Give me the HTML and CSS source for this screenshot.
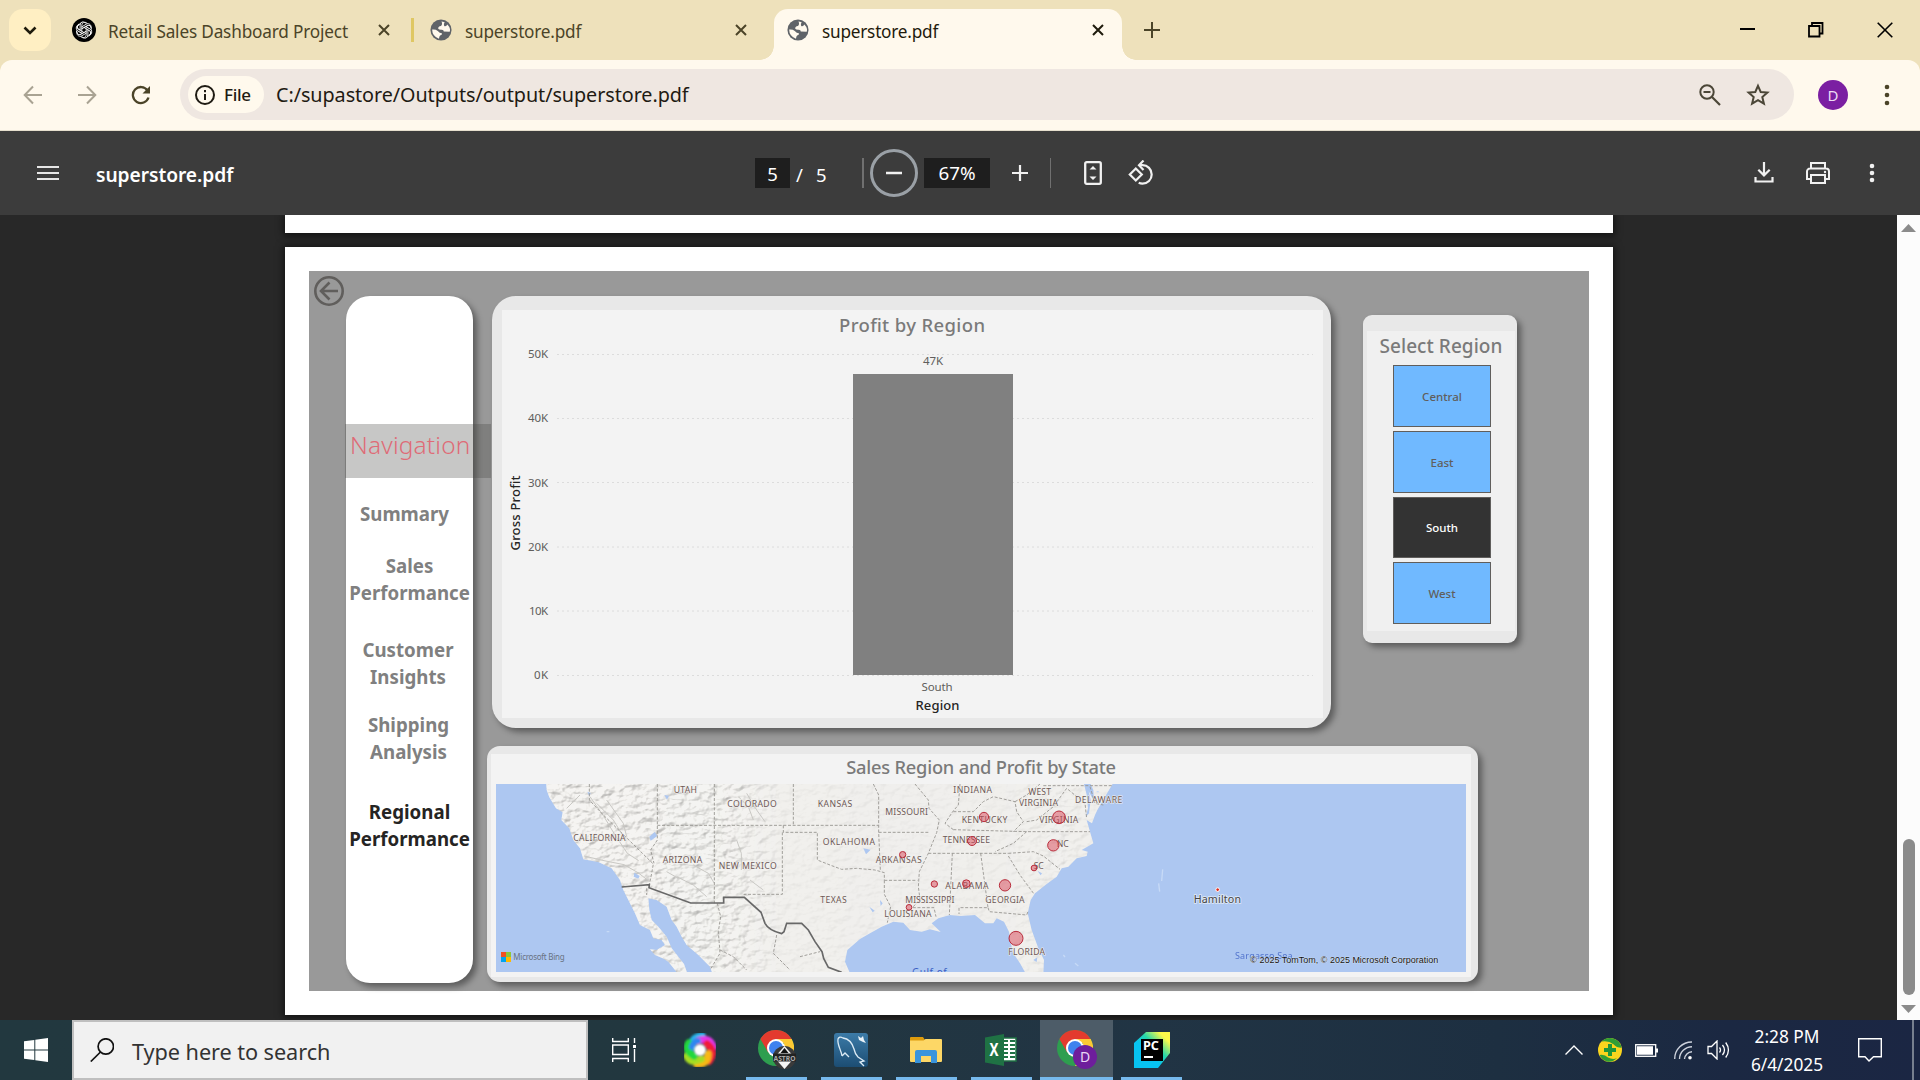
FILE: index.html
```html
<!DOCTYPE html>
<html lang="en">
<head>
<meta charset="utf-8">
<title>superstore.pdf</title>
<link rel="stylesheet" href="styles.css">
</head>
<body>
<svg class="defs" width="0" height="0">
  <defs>
    <symbol id="globe" viewBox="0 0 24 24"><circle cx="12" cy="12" r="11.500" fill="#5f6368"/><path d="M12.500 2.800Q14 6 12 7.500 8.500 8 9 10.500q1 1.500 4 1.200 2 0 2 2l6.500.2q.5-1.500.3-3Q21 8 19 6q-1.500 2.500-3.500 1.500-1-2 .5-4Q14 2.800 12.500 2.800zM2.300 11.500Q6 11 8.500 13q2 2.500 4.500 2.500.5 2-2 2.500-1 1-1.200 3.500Q2.500 19 2.300 11.500z" fill="#fff9ed"/></symbol>
    <symbol id="close" viewBox="0 0 12 12"><path d="M1 1l10 10M11 1L1 11" stroke="currentColor" stroke-width="2" fill="none"/></symbol>
    <symbol id="chrome" viewBox="0 0 36 36"><circle cx="18" cy="18" r="18" fill="#2e9e4f"/><path d="M2.400 9A18 18 0 0 1 33.600 9H18L10.200 22.500z" fill="#e33b2e"/><path d="M33.600 9A18 18 0 0 1 18 36l7.800-13.500L26 9z" fill="#fcc934"/><path d="M18 9h15.600l-1 4H24z" fill="#fcc934"/><circle cx="18" cy="18" r="9" fill="#fff"/><circle cx="18" cy="18" r="7" fill="#3f82ee"/></symbol>
  </defs>
</svg>

<header class="tabs">
  <button class="tab-search"><svg width="14" height="9" viewBox="0 0 14 9"><path d="M1.500 1.500L7 7l5.500-5.500" fill="none" stroke="#1f1b0c" stroke-width="2.600"/></svg></button>
  <div class="tab tab-one">
    <svg class="fav" width="24" height="24" viewBox="0 0 24 24"><circle cx="12" cy="12" r="12" fill="#000"/><g fill="none" stroke="#fff" stroke-width=".9"><path id="petal" d="M9.800 13.300V7.500c0-3.800 4.800-4 5.600-1.500M9.800 8.800l4.600-2.700c3-1.500 5.500 1.500 4.300 4"/><use href="#petal" transform="rotate(60 12 12)"/><use href="#petal" transform="rotate(120 12 12)"/><use href="#petal" transform="rotate(180 12 12)"/><use href="#petal" transform="rotate(240 12 12)"/><use href="#petal" transform="rotate(300 12 12)"/></g></svg>
    <span class="tab-title long">Retail Sales Dashboard Project</span>
    <svg class="x" width="12" height="12"><use href="#close"/></svg>
  </div>
  <i class="tab-sep"></i>
  <div class="tab tab-two">
    <svg class="fav" width="22" height="22"><use href="#globe"/></svg>
    <span class="tab-title">superstore.pdf</span>
    <svg class="x" width="12" height="12"><use href="#close"/></svg>
  </div>
  <div class="tab tab-active">
    <svg class="fav" width="22" height="22"><use href="#globe"/></svg>
    <span class="tab-title">superstore.pdf</span>
    <svg class="x" width="12" height="12"><use href="#close"/></svg>
  </div>
  <svg class="new-tab" width="16" height="16" viewBox="0 0 16 16"><path d="M8 0v16M0 8h16" stroke="#4b4428" stroke-width="2"/></svg>
  <div class="win">
    <svg width="16" height="16" viewBox="0 0 16 16"><path d="M1 7h15" stroke="#000" stroke-width="2"/></svg>
    <svg width="16" height="16" viewBox="0 0 16 16"><path d="M1 4h10.500v10.500H1zM4 4V1h10.500v10.500h-3" fill="none" stroke="#000" stroke-width="1.800"/></svg>
    <svg width="16" height="16" viewBox="0 0 16 16"><path d="M.7.7l14.600 14.600M15.300.7L.7 15.300" stroke="#000" stroke-width="1.600"/></svg>
  </div>
</header>

<div class="toolbar-wrap">
<div class="toolbar">
  <svg class="back" width="20" height="20" viewBox="0 0 20 20"><path d="M19 10H2.500M10 1.500L1.700 10l8.300 8.500" fill="none" stroke="#a9a393" stroke-width="2"/></svg>
  <svg class="fwd" width="20" height="20" viewBox="0 0 20 20"><path d="M1 10h16.500M10 1.500l8.300 8.500-8.300 8.500" fill="none" stroke="#a9a393" stroke-width="2"/></svg>
  <svg class="reload" width="20" height="20" viewBox="0 0 20 20"><path d="M17.500 12.500A8 8 0 1 1 16.500 5.500" fill="none" stroke="#4b4428" stroke-width="2.300"/><path d="M19 1v7.500h-7.500z" fill="#4b4428"/></svg>
  <div class="omnibox">
    <div class="chip"><svg width="20" height="20" viewBox="0 0 20 20"><circle cx="10" cy="10" r="9" fill="none" stroke="#1f1b13" stroke-width="2"/><path d="M10 9v6M10 5v2.200" stroke="#1f1b13" stroke-width="2"/></svg><span>File</span></div>
    <span class="url">C:/supastore/Outputs/output/superstore.pdf</span>
    <svg class="lens" width="22" height="22" viewBox="0 0 22 22"><circle cx="8" cy="8" r="6.700" fill="none" stroke="#4b4637" stroke-width="2"/><path d="M13 13l8 8M4.500 8h7" stroke="#4b4637" stroke-width="2.200"/></svg>
    <svg class="star" width="24" height="24" viewBox="0 0 24 24"><path d="M12 2.800l2.700 6.200 6.700.6-5.100 4.400 1.600 6.600-5.900-3.500-5.900 3.500 1.600-6.600-5.100-4.400 6.700-.6z" fill="none" stroke="#4b4637" stroke-width="2"/></svg>
  </div>
  <span class="avatar">D</span>
  <svg class="kebab" width="6" height="22" viewBox="0 0 6 22"><g fill="#4b4428"><circle cx="3" cy="3" r="2.300"/><circle cx="3" cy="11" r="2.300"/><circle cx="3" cy="19" r="2.300"/></g></svg>
</div>
</div>

<div class="pdfbar">
  <svg class="burger" width="22" height="16" viewBox="0 0 22 16"><path d="M0 2h22M0 8h22M0 14h22" stroke="#e6e6e6" stroke-width="2"/></svg>
  <span class="doc">superstore.pdf</span>
  <div class="pages"><span class="box page-no">5</span><span class="slash">/</span><span class="total">5</span></div>
  <i class="rule"></i>
  <svg class="minus" width="48" height="48" viewBox="0 0 48 48"><circle cx="24" cy="24" r="22.500" fill="none" stroke="#9aa0a6" stroke-width="3"/><path d="M16 24h16" stroke="#f1f1f1" stroke-width="2.500"/></svg>
  <span class="box zoom">67%</span>
  <svg class="plus" width="16" height="16" viewBox="0 0 16 16"><path d="M8 0v16M0 8h16" stroke="#f1f1f1" stroke-width="2.200"/></svg>
  <i class="rule thin"></i>
  <svg class="fit" width="18" height="24" viewBox="0 0 18 24"><rect x="1.200" y="1.200" width="15.600" height="21.600" rx="1.500" fill="none" stroke="#f1f1f1" stroke-width="2.300"/><path d="M5.500 8.500L9 5l3.500 3.500zM5.500 15.500L9 19l3.500-3.500z" fill="#f1f1f1"/></svg>
  <svg class="rot" width="26" height="26" viewBox="0 0 26 26"><path d="M1.800 14.500l6-6 6 6-6 6z" fill="none" stroke="#f1f1f1" stroke-width="2.200"/><path d="M11.500 5.200h3a9.200 9.200 0 0 1 0 18.400c-1.500 0-2.700-.3-3.800-.8" fill="none" stroke="#f1f1f1" stroke-width="2.200"/><path d="M15.500.5L11 5.200l4.500 4.700" fill="none" stroke="#f1f1f1" stroke-width="2.200"/></svg>
  <svg class="dl" width="20" height="22" viewBox="0 0 20 22"><path d="M10 0v13M4.300 7.700L10 13.400l5.700-5.700M1.500 15v4.500h17V15" fill="none" stroke="#f1f1f1" stroke-width="2.200"/></svg>
  <svg class="print" width="24" height="22" viewBox="0 0 24 22"><g fill="none" stroke="#f1f1f1" stroke-width="2"><path d="M5 6V1h14v5M5 17H1V9.500A3 3 0 0 1 4 6.500h16a3 3 0 0 1 3 3V17h-4"/><path d="M5 13h14v8H5z"/></g><circle cx="19" cy="10" r="1.200" fill="#f1f1f1"/></svg>
  <svg class="kebab2" width="6" height="20" viewBox="0 0 6 20"><g fill="#f1f1f1"><circle cx="3" cy="3" r="2.300"/><circle cx="3" cy="10" r="2.300"/><circle cx="3" cy="17" r="2.300"/></g></svg>
</div>

<main class="viewer">
  <div class="sheets">
    <div class="sheet prev"></div>
    <div class="sheet current">
      <div class="report">
        <svg class="go-back" width="30" height="30" viewBox="0 0 30 30"><circle cx="15" cy="15" r="13.700" fill="none" stroke="#605e5c" stroke-width="2.600"/><path d="M24 15H7M15.500 6.500L7 15l8.500 8.500" fill="none" stroke="#605e5c" stroke-width="2.600"/></svg>
        <nav class="nav">
          <div class="nav-head">Navigation</div>
          <a class="n1">Summary</a>
          <a class="n2">Sales<br>Performance</a>
          <a class="n3">Customer<br>Insights</a>
          <a class="n4">Shipping<br>Analysis</a>
          <a class="n5">Regional<br>Performance</a>
        </nav>
        <div class="boards">
          <div class="row">
            <section class="card chart"><div class="inner">
              <svg width="821" height="408" viewBox="502 310 821 408">
                <text class="title" x="912" y="332" text-anchor="middle" textLength="146">Profit by Region</text>
                <g class="grid"><path d="M557 354.500H1313M557 418.500H1313M557 482.500H1313M557 547H1313M557 611H1313M557 675.500H1313"/></g>
                <g class="tick" text-anchor="end"><text x="548" y="358" textLength="20">50K</text><text x="548" y="422" textLength="20">40K</text><text x="548" y="487" textLength="20">30K</text><text x="548" y="551" textLength="20">20K</text><text x="548" y="615" textLength="19">10K</text><text x="548" y="679" textLength="14">0K</text></g>
                <rect x="853" y="374" width="160" height="301" fill="#808080"/>
                <g class="tick" text-anchor="middle"><text x="933" y="365" textLength="20">47K</text><text x="937" y="691" textLength="31">South</text></g>
                <g class="axis" text-anchor="middle"><text x="937.500" y="710" textLength="44">Region</text><text transform="translate(519.500 513) rotate(-90)" textLength="75">Gross Profit</text></g>
              </svg>
            </div></section>
            <section class="card slicer"><div class="inner">
              <h2>Select Region</h2>
              <button>Central</button><button>East</button><button class="on">South</button><button>West</button>
            </div></section>
          </div>
          <section class="card mapcard"><div class="inner">
            <h2>Sales Region and Profit by State</h2>
            <svg class="map" width="970" height="188" viewBox="48 132 2910 564">
              <defs>
                <path id="land" d="M198 120L200 150 208 172 228 205 248 217 244 240 268 265 280 300 300 325 310 358 355 366 395 385 420 420 430 450 445 480 465 520 480 555 510 570 520 595 545 600 555 615 530 630 510 628 525 645 548 655 565 665 585 690 592 700H622L612 672 595 650 575 625 560 590 535 560 515 540 508 510 505 475 530 480 560 500 575 540 590 560 605 590 620 615 655 645 690 680 697 700H1110L1095 665 1102 630 1140 597 1170 580 1205 560 1240 545 1270 548 1290 570 1325 575 1350 568 1382 576 1355 550 1375 535 1410 525 1440 528 1485 525 1515 550 1540 550 1550 535 1572 545 1587 575 1590 600 1600 640 1620 670 1637 700H1690L1692 660 1675 625 1655 570 1643 520 1652 480 1665 460 1700 432 1730 410 1745 385 1765 380 1790 355 1820 348 1823 335 1805 330 1840 310 1830 275 1820 240 1836 250 1845 225 1852 210 1875 170 1905 120z"/>
                <clipPath id="landclip"><use href="#land"/></clipPath>
                <linearGradient id="fade" x1="0" x2="1"><stop offset="0" stop-color="#fff"/><stop offset=".32" stop-color="#ddd"/><stop offset=".42" stop-color="#333"/><stop offset=".8" stop-color="#222"/><stop offset=".9" stop-color="#555"/><stop offset="1" stop-color="#111"/></linearGradient>
                <mask id="reliefmask" maskUnits="userSpaceOnUse" x="190" y="130" width="1720" height="570"><rect x="190" y="130" width="1720" height="570" fill="url(#fade)"/></mask>
                <filter id="relief" x="0" y="0" width="1" height="1" color-interpolation-filters="sRGB"><feTurbulence type="fractalNoise" baseFrequency=".034 .05" numOctaves="3" seed="8"/><feColorMatrix values="0 0 0 0 0 0 0 0 0 0 0 0 0 0 0 1 0 0 0 0"/><feDiffuseLighting surfaceScale="9" diffuseConstant="1.270" lighting-color="#f1f0ed"><feDistantLight azimuth="225" elevation="55"/></feDiffuseLighting></filter>
              </defs>
              <rect x="48" y="132" width="2910" height="564" fill="#adc7f1"/>
              <use href="#land" fill="#f0efec"/>
              <g clip-path="url(#landclip)"><g mask="url(#reliefmask)" opacity=".34"><rect x="190" y="130" width="1720" height="570" filter="url(#relief)"/></g></g>
              <g fill="none" stroke="#c9c8c4" stroke-width="3"><path d="M312 348l60 14 60 12 42 24 26 20M330 170l42 60 30 50 40 60 34 22M350 190l50 50 38 62M380 180l50 70 10 40M300 165l-40 40M640 375l45 25 18 30M590 410l50 25 40 35M560 395l35 20M775 170l30 30 15 40M800 160l30 50 25 35M770 300l14 40 0 50M810 420l40 30"/></g>
              <path d="M1812 132l8 32 4 40-7 28 10-12 5-40-6-26 16 30-2-34-8-18zM508 290l16-14 8 12-20 14zM463 398l16 10-4 8-14-6zM553 165l14 2-6 12zM1150 325l22 4-14 14zM1168 500l16 12-6 5zM1200 480l8 10-6 8zM1660 660l12-8-2 14zM322 155l10 4-4 10zM1672 392l14 8-4 6z" fill="#adc7f1"/>
              <g fill="none" stroke="#9b9995" stroke-width="2.800" stroke-dasharray="9 5">
                <path d="M328 132V180L370 225 520 372 515 400 508 434M532 132V300L512 330 522 370M532 256H1195M703 132V490M940 132V256M910 256V277H1012V360L1050 375 1085 388 1130 385 1185 390 1213 398V421M907 277V463H792V470M1180 132L1196 165V277L1201 390M1196 277H1350M1213 421H1312M1213 421V463L1232 500 1222 548"/>
                <path d="M1305 132L1345 180 1347 205 1378 240 1370 278 1345 340 1318 395 1315 440 1320 478 1297 503H1362L1368 530M1345 340H1585M1417 340L1408 525M1502 340L1524 503H1437V522M1524 503L1528 515 1640 525 1645 512M1420 269L1640 275H1830M1640 275L1600 310 1545 335M1585 340L1660 335 1690 348 1740 388M1585 348L1620 405 1662 462M1440 132L1435 195 1418 215 1395 250 1420 269M1420 215L1480 215 1510 185 1540 170 1605 185 1610 215 1630 245 1600 275M1605 185L1640 165 1680 132M1640 245L1670 240 1720 200 1760 145 1815 190 1820 235M1690 137H1900M1830 140L1845 190 1870 195"/>
                <path d="M712 490L722 530 715 575 720 640 690 690M720 630L760 650 800 690M890 585L880 640 930 690M960 650L1020 635M500 445V465"/>
              </g>
              <path d="M425 441L508 434 507 443 632 489H731V472H793L843 517 855 550Q865 570 905 581L912 575 920 550H965L985 570 1005 605 1026 635 1031 655 1045 682 1085 697" fill="none" stroke="#686868" stroke-width="5"/>
              <g stroke="#c7daf6" stroke-width="4" fill="none"><path d="M2048 388l-3 35M2036 430l3 25M1750 645l5 6M1785 670l10 8M380 575h8M1850 155h6"/></g>
              <g class="states">
                <text x="581" y="158" textLength="70">UTAH</text><text x="742" y="200" textLength="148">COLORADO</text><text x="1013" y="200" textLength="104">KANSAS</text><text x="280" y="302" textLength="157">CALIFORNIA</text><text x="548" y="368" textLength="119">ARIZONA</text><text x="716" y="386" textLength="174">NEW MEXICO</text><text x="1028" y="314" textLength="157">OKLAHOMA</text><text x="1021" y="488" textLength="79">TEXAS</text><text x="1216" y="224" textLength="128">MISSOURI</text><text x="1187" y="368" textLength="138">ARKANSAS</text><text x="1213" y="530" textLength="142">LOUISIANA</text><text x="1276" y="488" textLength="147">MISSISSIPPI</text><text x="1396" y="446" textLength="130">ALABAMA</text><text x="1516" y="488" textLength="118">GEORGIA</text><text x="1585" y="644" textLength="110">FLORIDA</text><text x="1388" y="308" textLength="142">TENNESSEE</text><text x="1445" y="248" textLength="137">KENTUCKY</text><text x="1420" y="158" textLength="116">INDIANA</text><text x="1645" y="166" textLength="68">WEST</text><text x="1617" y="198" textLength="117">VIRGINIA</text><text x="1678" y="248" textLength="117">VIRGINIA</text><text x="1785" y="188" textLength="142">DELAWARE</text><text x="1730" y="320" textLength="36">NC</text><text x="1661" y="387" textLength="30">SC</text>
              </g>
              <g class="dots"><circle cx="1512" cy="231" r="14"/><circle cx="1737" cy="232" r="19"/><circle cx="1476" cy="303" r="13.500"/><circle cx="1720" cy="316" r="17"/><circle cx="1268" cy="344" r="9.500"/><circle cx="1662" cy="384" r="8.500"/><circle cx="1363" cy="432" r="9.500"/><circle cx="1459" cy="431" r="11.500"/><circle cx="1575" cy="436" r="17"/><circle cx="1287" cy="502" r="8.500"/><circle cx="1608" cy="595" r="21"/></g>
              <circle cx="2213" cy="449" r="5.500" fill="#e02b1d" stroke="#fff" stroke-width="3"/>
              <text class="city" x="2141" y="489" textLength="142">Hamilton</text>
              <text class="sea" x="1296" y="708" textLength="104" font-size="30">Gulf of</text>
              <text class="sea faint" x="2265" y="657" textLength="173">Sargasso Sea</text>
              <text class="copy" x="2311" y="669" textLength="564" lengthAdjust="spacingAndGlyphs">© 2025 TomTom, © 2025 Microsoft Corporation</text>
              <path d="M63 636h15v15H63z" fill="#f25022"/><path d="M78 636h15v15H78z" fill="#8cc63e"/><path d="M63 651h15v15H63z" fill="#00a4ef"/><path d="M78 651h15v15H78z" fill="#ffb900"/>
              <text class="bing" x="100" y="661" textLength="154">Microsoft Bing</text>
            </svg>
          </div></section>
        </div>
      </div>
    </div>
  </div>
  <div class="scroll">
    <svg width="15" height="8" viewBox="0 0 15 8"><path d="M0 8L7.500 0 15 8z" fill="#8b8b8b"/></svg>
    <i class="thumb"></i>
    <svg width="15" height="8" viewBox="0 0 15 8"><path d="M0 0l7.500 8L15 0z" fill="#8b8b8b"/></svg>
  </div>
</main>

<footer class="taskbar">
  <div class="start"><svg width="24" height="24" viewBox="0 0 24 24"><path d="M0 3.300L10.300 2v9.500H0zM11.300 1.700L24 0v11.500H11.300zM0 12.500h10.300V22L0 20.700zM11.300 12.500H24V24l-12.700-1.700z" fill="#fff"/></svg></div>
  <div class="search"><svg width="24" height="24" viewBox="0 0 24 24"><circle cx="15.800" cy="8.500" r="7.700" fill="none" stroke="#111" stroke-width="1.700"/><path d="M10.500 14L.8 23.500" stroke="#111" stroke-width="1.700"/></svg><span>Type here to search</span></div>
  <svg class="taskview" width="25" height="24" viewBox="0 0 25 24"><g fill="none" stroke="#fff" stroke-width="1.400"><path d="M.7 0v3.500h15.600V0M.7 7h15.600v9.500H.7zM.7 24v-3.500h15.600V24M22.500 0v5M22.500 11v13"/></g><path d="M21 7h3v3h-3z" fill="#fff"/></svg>
  <div class="apps">
    <div class="app idle"><svg width="40" height="40" viewBox="-20 -20 40 40"><defs><filter id="soft"><feGaussianBlur stdDeviation=".8"/></filter></defs><g fill="none" stroke-width="7.500" stroke-linecap="round" filter="url(#soft)"><path d="M-8-3Q-8-13 2-14" stroke="#25b5ec"/><path d="M-2-9Q9-14 13-3" stroke="#e338ea"/><path d="M7-6Q16 1 9 11" stroke="#f01e37"/><path d="M8 4Q8 14-3 14" stroke="#f8b817"/><path d="M1 9Q-9 14-13 6" stroke="#a7dd22"/><path d="M-6 6Q-16 0-11-7" stroke="#21d83c"/><path d="M-8-3Q-6-9-2-9" stroke="#2f86f0" stroke-width="6"/></g><circle r="6" fill="#fff" filter="url(#soft)"/></svg></div>
    <div class="app"><svg width="38" height="40" viewBox="0 0 38 40"><use href="#chrome" width="36" height="36"/><circle cx="26.500" cy="27.500" r="11.500" fill="#3a3a3a"/><path d="M26.500 16l7 8h-14zM26.500 39l7-8h-14z" fill="#f5f5f5"/><path d="M26.500 18l4 5h-8z" fill="#111"/><rect x="15" y="23.500" width="23" height="8" fill="#222"/><text x="15.500" y="30.500" font-size="7.500" textLength="22" lengthAdjust="spacingAndGlyphs" fill="#aaa" font-weight="700">ASTRO</text></svg></div>
    <div class="app"><svg width="36" height="36" viewBox="0 0 36 36"><defs><linearGradient id="my" x2="0" y2="1"><stop stop-color="#3c7ba8"/><stop offset="1" stop-color="#1c4d73"/></linearGradient></defs><rect x="0" y="1" width="34" height="34" rx="3" fill="url(#my)"/><path d="M8 24C7 17 3 13 4 7q1-3 5-1 8 1 11 11 1 5 4 8l6 4-4 1 4 4M8 24l3-3 4 4" fill="none" stroke="#dcebf5" stroke-width="1.300"/><path d="M24 4l3 2 2-2 1 4 2 3-3-1-4-2z" fill="#e9f2f8"/></svg></div>
    <div class="app"><svg width="36" height="36" viewBox="1 0 36 36"><path d="M2 8V6q0-1 1-1h12l2 3v4H2z" fill="#dd9b0c"/><path d="M2 8.500h13.500l2-1.500H33q1 0 1 1v21q0 1-1 1H3q-1 0-1-1z" fill="#fdd766"/><path d="M7 31V20q0-2 2-2h18q2 0 2 2v11h-6v-7H13v7z" fill="#3a94dc"/></svg></div>
    <div class="app"><svg width="36" height="36" viewBox="1 0 36 36"><rect x="18" y="6" width="15" height="23" fill="#fff" stroke="#1f7244" stroke-width="1.500"/><path d="M20 9h5M27 9h5M20 13h5M27 13h5M20 17h5M27 17h5M20 21h5M27 21h5M20 25h5M27 25h5" stroke="#1f7244" stroke-width="2"/><path d="M2 5.500L21 2v32L2 30.500z" fill="#1f7244"/><text x="6.500" y="24" font-size="17" textLength="9" lengthAdjust="spacingAndGlyphs" font-weight="700" fill="#fff">X</text></svg></div>
    <div class="app live"><svg width="40" height="40" viewBox="0 0 40 40"><use href="#chrome" width="36" height="36"/><circle cx="28" cy="27" r="12" fill="#6e1e9c"/><text x="28" y="32" font-size="14" text-anchor="middle" fill="#ead6f5">D</text></svg></div>
    <div class="app"><svg width="36" height="36" viewBox="0 0 36 36"><defs><linearGradient id="pc" x1="0" y1="1" x2="1" y2="0"><stop offset=".4" stop-color="#07c3f2"/><stop offset=".6" stop-color="#27d7a8"/><stop offset=".85" stop-color="#fcf84a"/></linearGradient></defs><path d="M12 0h24v21L24 36H0V11z" fill="url(#pc)"/><rect x="7" y="7" width="22" height="22" fill="#000"/><text x="9" y="18" font-size="11.500" font-weight="700" textLength="16" lengthAdjust="spacingAndGlyphs" fill="#fff">PC</text><path d="M10 25h9" stroke="#fff" stroke-width="2"/></svg></div>
  </div>
  <div class="tray">
    <svg width="18" height="10" viewBox="0 0 18 10"><path d="M.5 9.500L9 1l8.500 8.500" fill="none" stroke="#fff" stroke-width="1.400"/></svg>
    <svg class="shield" width="24" height="24" viewBox="0 0 24 24"><circle cx="12" cy="12" r="12" fill="#fad51e"/><path d="M3.500 3.500Q9-1.500 16 .7q6.500 2.500 7.500 9-5 0-8-3.500-5-4-12-2.700zM1.500 17q5-1 8.500 2.500 5 2.500 9 .5-4 4.500-10 3.500-5-1.500-7.500-6.500z" fill="#2f9e35"/><path d="M12 6v12M6 12h12" stroke="#20963a" stroke-width="4"/></svg>
    <svg class="batt" width="23" height="13" viewBox="0 0 23 13"><rect x=".7" y=".7" width="20" height="11.600" fill="none" stroke="#fff" stroke-width="1.300"/><path d="M2 2.200h16v8.600H2zM21 4.500h2v4h-2z" fill="#fff"/></svg>
    <svg class="wifi" width="18" height="19" viewBox="0 0 18 19"><g fill="none" stroke="#cdd2dc" stroke-width="1.400"><path d="M.7 18A17 17 0 0 1 18 1M5.500 18A12.500 12.500 0 0 1 18 5.700M10.500 18A8 8 0 0 1 18 10.700"/></g><circle cx="16" cy="16.800" r="1.800" fill="#fff"/></svg>
    <svg class="vol" width="23" height="20" viewBox="0 0 23 20"><g fill="none" stroke="#fff" stroke-width="1.300"><path d="M1 6.500h3.500L10 1v18L4.500 13.500H1zM12.500 7.500q2 2.500 0 5M15.500 5q4 5 0 10M18.700 2.500q5.500 7.500 0 15"/></g></svg>
    <div class="clock"><span>2:28 PM</span><span class="date">6/4/2025</span></div>
    <svg class="note" width="24" height="24" viewBox="0 0 24 24"><path d="M.7.700h22.600v18H15.500L11 23l-4-4.300H.7z" fill="none" stroke="#fff" stroke-width="1.400"/></svg>
    <i class="peek"></i>
  </div>
</footer>
</body>
</html>
```
FILE: styles.css
```css
* { box-sizing: border-box; }
body { margin: 0; width: 1920px; height: 1080px; overflow: hidden; background: #282828; font-family: "Noto Sans", "Open Sans", sans-serif; color: #1f1b13; }
svg { display: block; flex: none; }
button { font-family: inherit; padding: 0; border: 0; }
span { white-space: nowrap; }
.defs { position: absolute; }

/* tab strip */
.tabs { display: flex; height: 60px; background: #eee1bb; padding: 9px 27px 0 9px; }
.tab-search { width: 42px; height: 42px; border-radius: 14px; background: #ffefc3; display: flex; align-items: center; justify-content: center; }
.tab { display: flex; align-items: center; height: 42px; color: #4b4428; }
.tab-one { width: 360px; padding: 0 21px 0 21px; }
.tab-sep { width: 3px; height: 24px; margin-top: 9px; background: #dfc763; }
.tab-two { width: 360px; padding: 0 27px 0 16px; }
.tab-title { font-size: 17.200px; line-height: 24px; margin: 4px 0 0 13px; letter-spacing: -.22px; }
.tab-title.long { margin-left: 12px; letter-spacing: -.17px; }
.tab .x { margin-left: auto; }
.tab-active { position: relative; width: 348px; height: 51px; padding: 0 18px 9px 13px; border-radius: 14px 14px 0 0; background: #fff9ed; color: #1f1b0c; }
.tab-active::before, .tab-active::after { content: ""; position: absolute; bottom: 0; width: 14px; height: 14px; }
.tab-active::before { left: -14px; background: radial-gradient(circle at 0 0, transparent 13.500px, #fff9ed 14px); }
.tab-active::after { right: -14px; background: radial-gradient(circle at 100% 0, transparent 13.500px, #fff9ed 14px); }
.new-tab { margin: 13px 0 0 22px; }
.win { display: flex; gap: 53px; margin: 13px 0 0 auto; }

/* address bar */
.toolbar-wrap { background: #eee1bb; }
.toolbar { display: flex; align-items: center; height: 71px; padding: 0 30px 1px 23px; background: #fff9ed; border-bottom: 1px solid #e6dfce; border-radius: 12px 12px 0 0; }
.fwd { margin-left: 34px; }
.reload { margin-left: 34px; }
.omnibox { display: flex; align-items: center; width: 1614px; height: 51px; margin-left: 29px; padding-left: 8px; border-radius: 26px; background: #efe7e1; }
.chip { display: flex; align-items: center; width: 76px; height: 37px; padding-left: 7px; border-radius: 19px; background: #fff9ed; font-size: 17px; font-weight: 500; }
.chip span { margin-left: 9px; letter-spacing: -.3px; }
.url { margin-left: 12px; font-size: 19.800px; letter-spacing: -.07px; }
.lens { margin-left: auto; }
.star { margin: 0 24px 0 25px; }
.avatar { width: 30px; height: 30px; margin-left: 24px; border-radius: 50%; background: #7b1fa2; color: #eddcf4; font-size: 15px; line-height: 30px; text-align: center; }
.kebab { margin-left: auto; }

/* document toolbar */
.pdfbar { display: flex; align-items: center; height: 84px; padding: 0 45px 0 37px; background: #3c3c3c; color: #fff; font-size: 18.500px; }
.doc { width: 659px; padding: 2px 0 0 37px; font-size: 19.200px; font-weight: 600; letter-spacing: -.05px; }
.pages { display: flex; align-items: center; width: 107px; margin-left: 37px; }
.box { height: 30px; line-height: 31px; background: #1e1e1e; text-align: center; }
.page-no { width: 35px; }
.slash { margin: 2px 0 0 6px; }
.total { margin: 2px 0 0 13px; }
.rule { width: 2px; height: 30px; background: #707070; }
.rule.thin { width: 1px; margin-left: 22px; }
.minus { margin-left: 6px; }
.zoom { width: 66px; margin-left: 6px; font-size: 18.800px; }
.plus { margin-left: 22px; }
.fit { margin-left: 33px; }
.rot { margin-left: 26px; }
.dl { margin-left: auto; }
.print { margin-left: 32px; }
.kebab2 { margin-left: 39px; }

/* document area */
.viewer { display: flex; height: 805px; background: #282828; overflow: hidden; }
.sheets { width: 1897px; padding-left: 285px; }
.sheet { width: 1328px; background: #fff; box-shadow: 0 1px 7px 2px rgba(0,0,0,.5); }
.prev { height: 18px; margin-bottom: 14px; }
.current { height: 768px; padding: 24px; }
.report { display: flex; width: 1280px; height: 720px; background: #999; }
.go-back { margin: 5px 2px 0 5px; }
.nav { width: 127px; height: 687px; margin-top: 25px; border-radius: 24px; background: #fff; box-shadow: 4px 4px 6px rgba(0,0,0,.4); display: flex; flex-direction: column; text-align: center; font-size: 18.700px; font-weight: 700; line-height: 27px; color: #808080; }
.nav-head { width: 146px; height: 54px; margin: 128px 0 0 -1px; padding: 5px 0 0 5px; background: rgba(70,70,65,.3); color: #df6b76; font-size: 24.400px; line-height: 31px; font-weight: 350; letter-spacing: .2px; text-align: left; }
.n1 { margin: 22px 10px 0 0; }
.n2 { margin-top: 25px; }
.n3 { margin: 30px 3px 0 0; }
.n4 { margin: 21px 2px 0 0; }
.n5 { margin-top: 33px; color: #252423; }
.boards { margin: 25px 0 0 14px; }
.row { display: flex; padding-left: 5px; }
.card { background: #e8e8e8; box-shadow: 4px 4px 6px rgba(0,0,0,.4); }
.inner { background: #f3f3f3; }
.chart { width: 839px; height: 432px; padding: 14px 8px 10px 10px; border-radius: 24px; }
.title { font-size: 18.500px; font-weight: 500; fill: #7a7a7a; }
.grid path { stroke: #dcdcdc; stroke-width: 1; stroke-dasharray: 2 3; }
.tick { font-size: 11.500px; fill: #605e5c; }
.axis { font-size: 13px; font-weight: 500; fill: #252423; }
.slicer { width: 154px; height: 328px; margin: 19px 0 0 32px; padding: 16px 2px 12px 4px; border-radius: 9px; }
.slicer .inner { height: 300px; padding-left: 26px; background: #f0f0f0; }
.card h2 { margin: 0; font-size: 18.500px; font-weight: 500; line-height: 30px; color: #7a7a7a; text-align: center; white-space: nowrap; }
.card.slicer h2 { margin: 0 0 4px -26px; font-size: 19px; letter-spacing: .05px; }
.slicer button { display: block; width: 98px; height: 61.750px; margin-bottom: 4px; border: 1px solid #605e5c; background: #70b9ff; color: #605e5c; font-size: 11.500px; font-weight: 500; padding-top: 1px; }
.slicer button.on { background: #333; color: #fff; }
.mapcard { width: 991px; height: 236px; margin-top: 18px; padding: 8px 7px 5px 4px; border-radius: 13px; }
.mapcard .inner { height: 223px; padding: 0 5px; }
.card.mapcard h2 { line-height: 26px; height: 30px; font-size: 18.300px; letter-spacing: -.22px; }
.states text { font-size: 26px; fill: #6d5856; stroke: #f3f2ef; stroke-width: 3; paint-order: stroke; stroke-linejoin: round; }
.dots circle { fill: rgba(218,72,88,.5); stroke: #b92d3c; stroke-width: 3; }
.city { font-size: 32px; fill: #444; stroke: #dfe9f8; stroke-width: 5; paint-order: stroke; }
.sea { fill: #3b5fc4; }
.faint { font-size: 27px; opacity: .8; }
.copy { font-family: "Liberation Sans", Arial, sans-serif; font-size: 27px; fill: #111; stroke: #dfe9f8; stroke-width: 2; paint-order: stroke; }
.bing { font-size: 24px; fill: #687281; }
.scroll { display: flex; flex-direction: column; align-items: center; width: 23px; height: 805px; padding: 9px 0 7px; background: #fcfcfc; }
.thumb { width: 12px; height: 156px; margin: auto 0 10px; border-radius: 6px; background: #8b8b8b; }

/* taskbar */
.taskbar { display: flex; align-items: center; height: 60px; color: #fff; background: linear-gradient(90deg, #22383f 0, #22373f 35%, #213444 60%, #1d2f41 78%, #1b2842 90%, #1b2643 100%); }
.start { width: 72px; padding-left: 24px; }
.search { display: flex; align-items: center; width: 516px; height: 60px; padding-left: 16px; background: #f1f1f1; border: 2px solid #bfbfbf; color: #333; font-size: 21.700px; }
.search span { margin: 2px 0 0 18px; letter-spacing: -.07px; }
.taskview { margin-left: 24px; }
.apps { display: flex; margin-left: 32px; gap: 14px; }
.app { display: flex; align-items: center; justify-content: center; width: 61px; height: 60px; border-bottom: 3px solid #76b9ed; padding-top: 3px; }
.app.idle { width: 61px; border-color: transparent; margin-right: 2px; }
.app.live { width: 73px; margin: 0 -6px; background: #4d5c68; }
.tray { display: flex; align-items: center; margin-left: auto; height: 60px; }
.shield { margin-left: 15px; }
.batt { margin-left: 13px; }
.wifi { margin-left: 16px; }
.vol { margin-left: 15px; }
.clock { display: flex; flex-direction: column; align-items: center; width: 76px; margin-left: 19px; font-size: 17.300px; line-height: 28px; padding-top: 1px; }
.note { margin-left: 33px; }
.peek { width: 2px; height: 60px; margin: 0 6px 0 30px; background: #77808f; }
```
